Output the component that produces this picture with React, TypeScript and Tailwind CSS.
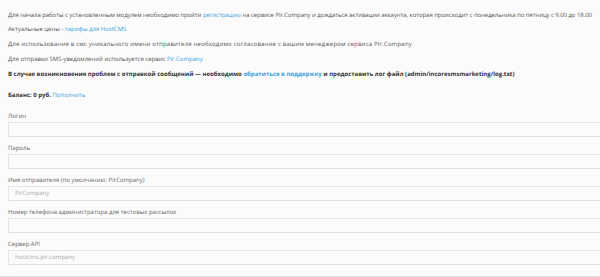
const link = "text-[#3aa0dc]";

function Field({ label, value }: { label: string; value?: string }) {
  return (
    <div className="flex flex-col">
      <label className="h-[8px] leading-[8px] text-[#666]">{label}</label>
      <div className="mt-[2px] mr-[-12px] h-[15px] border border-[#e6e6e6] border-b-[#e0e0e0] bg-[#fbfbfb] pl-[6px] leading-[13px] text-[#aaa]">
        {value}
      </div>
    </div>
  );
}

export default function App() {
  return (
    <div
      className="h-[277px] w-[600px] overflow-hidden bg-[#fbfbfb] text-[6px] text-[#555] [text-rendering:geometricPrecision]"
      style={{ fontFamily: '"Open Sans", sans-serif' }}
    >
      <div className="px-2 pt-[7.5px] leading-[14.75px] whitespace-nowrap">
        <p className="tracking-[-0.06px]">
          Для начала работы с установленным модулем необходимо пройти{" "}
          <a className={link}>регистрацию</a> на сервисе Pir.Company и дождаться активации аккаунта,
          которая происходит с понедельника по пятницу с 9.00 до 18.00
        </p>
        <p>
          Актуальные цены - <a className={link}>тарифы для HostCMS</a>
        </p>
        <p className="tracking-[0.2px]">
          Для использования в смс уникального имени отправителя необходимо согласование с вашим
          менеджером сервиса Pir.Company
        </p>
        <p>
          Для отправки SMS-уведомлений используется сервис <a className={link}>Pir.Company</a>
        </p>
        <p className="font-bold text-[#333]">
          В случае возникновения проблем с отправкой сообщений — необходимо{" "}
          <a className={link}>обратиться в поддержку</a> и предоставить лог файл
          (admin/incoresmsmarketing/log.txt)
        </p>
        <p className="mt-[6.4px]">
          <span className="font-bold text-[#333]">Баланс: 0 руб.</span>{" "}
          <a className={link}>Пополнить</a>
        </p>
      </div>
      <div className="mt-[9.6px] flex flex-col gap-[7px] px-2">
        <Field label="Логин" />
        <Field label="Пароль" />
        <Field label="Имя отправителя (по умолчанию: PirCompany)" value="PirCompany" />
        <Field label="Номер телефона администратора для тестовых рассылок" />
        <Field label="Сервер API" value="hostcms.pir.company" />
      </div>
      <div className="mt-[11px] border-t-2 border-[#dcdcdc]" />
    </div>
  );
}
